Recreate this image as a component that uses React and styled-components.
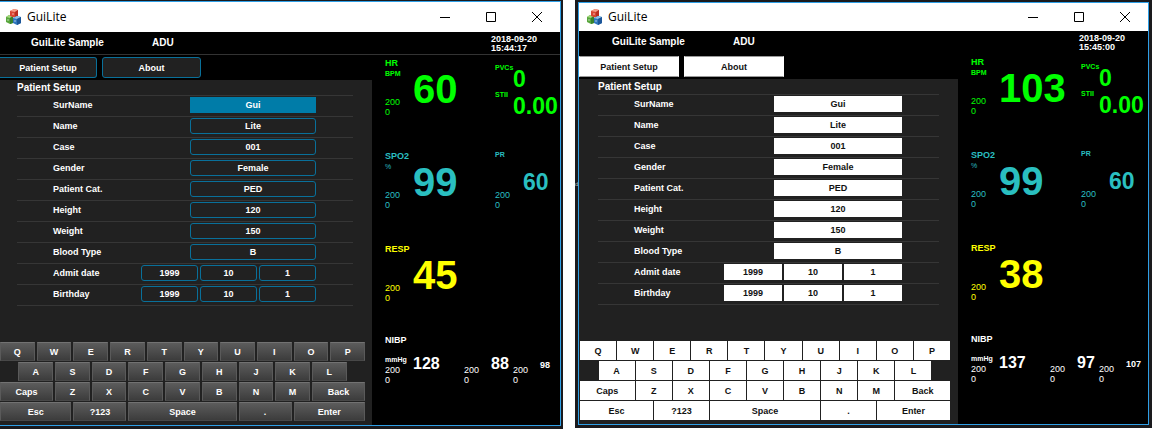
import React from 'react';
import styled, { createGlobalStyle, css } from 'styled-components';

const Global = createGlobalStyle`
  *, *::before, *::after { box-sizing: border-box; }
  body {
    margin: 0;
    background: #fff;
    color: #fff;
    font-family: "Liberation Sans Narrow", "Liberation Sans", Arial, sans-serif;
    font-size: 9px;
    line-height: 12px;
  }
  button, input { font: inherit; margin: 0; }
`;

const Page = styled.main`
  display: grid;
  grid-template-columns: minmax(0, 563fr) minmax(0, 577fr);
  gap: 12px;
  padding-right: 2px;
  align-items: start;
`;

const Desktop = styled.div`
  position: relative;
  padding: ${(p) => (p.$bright ? '2px 3px 3px' : '1px 2px 3px 0')};
  background: #1a1a1d;
`;

const DesktopCaption = styled.span`
  position: absolute;
  top: 178px;
  left: 0;
  color: #bbb;
  font-size: 6px;
`;

const WindowFrame = styled.section`
  position: relative;
  border: solid #2f9fe6;
  border-width: ${(p) => (p.$bright ? '1px' : '1px 1px 1px 0')};
  background: #000;
`;

const TitleBar = styled.header`
  display: flex;
  align-items: center;
  height: ${(p) => (p.$bright ? 28 : 30)}px;
  padding-left: ${(p) => (p.$bright ? 8 : 6)}px;
  background: #fff;
  color: #000;
`;

const WindowTitle = styled.h1`
  margin: 0 auto 0 5px;
  font: 400 12px/16px "Open Sans", "Noto Sans", sans-serif;
`;

const WindowButton = styled.button`
  display: flex;
  align-items: center;
  justify-content: center;
  width: 46px;
  height: 28px;
  padding: 0;
  border: 0;
  background: none;
  color: #000;
`;

const StatusBar = styled.div`
  display: flex;
  height: 23px;
  padding-left: ${(p) => (p.$bright ? 33 : 31)}px;
  border-bottom: 1px solid ${(p) => (p.$bright ? '#000' : '#333')};
  font-weight: 700;
`;

const StatusText = styled.div`
  width: 121px;
  font-size: 10px;
  line-height: 22px;
`;

const Clock = styled.time`
  width: 69px;
  margin-left: auto;
  padding-top: 3px;
  line-height: 9px;
`;

const ClockLine = styled.span`
  display: block;
`;

const Body = styled.div`
  display: grid;
  grid-template-columns: minmax(0, 1fr) ${(p) => (p.$bright ? 190 : 188)}px;
`;

const Left = styled.div`
  display: flex;
  flex-direction: column;
`;

const Tabs = styled.nav`
  display: flex;
  gap: 5px;
  padding: 2px 0;
`;

const face = css`
  border: 1px solid ${(p) => (p.$bright ? '#fff' : '#09709a')};
  border-radius: ${(p) => (p.$bright ? 0 : 3)}px;
  background: ${(p) => (p.$bright ? '#fff' : '#212121')};
  color: ${(p) => (p.$bright ? '#111' : '#fff')};
  font-weight: 700;
  text-align: center;
`;

const Tab = styled.button`
  ${face}
  width: ${(p) => (p.$bright ? 100 : 99)}px;
  height: 21px;
  padding: 0;
  ${(p) => p.$bright && css`border-color: #999 #fff;`}
  ${(p) => !p.$bright && css`
    &:first-child {
      width: 97px;
      border-left: 0;
      border-radius: 0 3px 3px 0;
    }
  `}
`;

const Panel = styled.div`
  flex: 1;
  background: #212121;
  font-weight: 700;
`;

const Form = styled.form`
  margin: 0 19px 36px ${(p) => (p.$bright ? 19 : 17)}px;
`;

const FormTitle = styled.h2`
  margin: 0;
  font-size: 10px;
  line-height: 15px;
`;

const FormRows = styled.div`
  border-bottom: 1px solid #363636;
`;

const Row = styled.div`
  display: flex;
  align-items: center;
  height: 21px;
  padding: 0 37px 2px 36px;
  border-top: 1px solid #363636;
`;

const RowLabel = styled.label`
  margin-right: auto;
`;

const Fields = styled.div`
  display: flex;
  gap: 2px;
`;

const fieldWidth = (p) => {
  if (p.$small) return p.$bright ? 58 : 57;
  return p.$bright ? 128 : 126;
};

const Field = styled.input`
  ${face}
  width: ${fieldWidth}px;
  height: 16px;
  padding: 0;
  ${(p) => p.$active && css`
    border-color: #007ca8;
    border-radius: 0;
    background: #007ca8;
  `}
`;

const Keyboard = styled.div`
  display: grid;
  grid-template-columns: repeat(20, minmax(0, 1fr));
  gap: 1px 0;
  padding: ${(p) => (p.$bright ? '0 7px 4px 1px' : '0 5px 4px 0')};
`;

const Key = styled.button`
  grid-column: ${(p) => p.$start} / span ${(p) => p.$span};
  height: 19px;
  margin-right: ${(p) => (p.$bright ? 1 : 2)}px;
  padding: 0;
  border: 1px solid;
  border-color: ${(p) => (p.$bright ? '#fff' : '#727272 #5a5a5a #484848 #5a5a5a')};
  background: ${(p) => (p.$bright ? '#fff' : 'linear-gradient(#5c5c5c, #3c3c3c)')};
  color: ${(p) => (p.$bright ? '#111' : '#fff')};
  font-weight: 700;
`;

const Vitals = styled.div`
  padding-left: 13px;
`;

const Block = styled.section`
  display: grid;
  grid-template-columns: 110px 1fr;
  align-items: start;
  height: 93px;
  padding-top: 2px;
  color: ${(p) => p.$color};
`;

const Measure = styled.div`
  display: flex;
`;

const MeasureLabels = styled.div`
  width: 28px;
`;

const Name = styled.div`
  height: 12px;
  font-size: ${(p) => (p.$small ? 7 : 9)}px;
  line-height: ${(p) => (p.$small ? 10 : 12)}px;
  font-weight: 700;
`;

const Unit = styled.div`
  height: 10px;
  font-size: 7px;
  font-weight: ${(p) => (p.$strong ? 700 : 400)};
  line-height: 10px;
`;

const Limits = styled.div`
  margin-top: ${(p) => (p.$spaced ? 18 : 0)}px;
  line-height: 10px;
`;

const Limit = styled.div`
  height: 10px;
`;

const valueSizes = {
  large: css`font-size: 40px; line-height: 64px;`,
  medium: css`font-size: 23px; line-height: 64px;`,
  small: css`font-size: 16px; line-height: 18px;`,
  tiny: css`font-size: 9px; line-height: 20px;`,
};

const Value = styled.div`
  ${(p) => valueSizes[p.$size]}
  font-weight: 700;
`;

const Pairs = styled.div`
  padding-top: 6px;
`;

const Pair = styled.div`
  display: grid;
  grid-template-columns: 18px 1fr;
  font-size: 7px;
  font-weight: 700;
  line-height: 10px;
`;

const PairValue = styled.div`
  margin-top: 5px;
  font-size: 23px;
  line-height: 22px;
`;

const Pressure = styled.section`
  font-weight: 400;
`;

const PressureGrid = styled.div`
  display: grid;
  grid-template-columns: 28px 51px 27px 22px 27px 1fr;
  margin-top: 9px;
`;

const PressureLabels = styled.div`
  min-width: 0;
`;

function AppIcon() {
  return (
    <svg width="16" height="16" viewBox="0 0 16 16" aria-hidden="true">
      <path d="M0 8l3-2 4 1v7l-3 1-4-2z" fill="#58a63c" />
      <path d="M0 8l3-2 4 1-3 2z" fill="#a5d87f" />
      <path d="M4 9l3-2v7l-3 1z" fill="#38812c" />
      <path d="M4 2l4-2 4 1v6l-3 2-5-2z" fill="#d94632" />
      <path d="M4 2l4-2 4 1-3 2z" fill="#f5a08c" />
      <path d="M9 3l3-2v6l-3 2z" fill="#b92e22" />
      <path d="M7 9l4-2 4 1v6l-4 2-4-2z" fill="#2f77bd" />
      <path d="M7 9l4-2 4 1-4 2z" fill="#92c4ea" />
      <path d="M11 10l4-2v6l-4 2z" fill="#1c5699" />
      <path d="M2 10v2M7 4v2M9 11v2" stroke="#fff" strokeOpacity=".6" />
    </svg>
  );
}

const glyphs = {
  Minimize: 'M1 6.5h10',
  Maximize: 'M1.5 1.5h9v9h-9z',
  Close: 'M1 1l10 10M11 1L1 11',
};

const rows = [
  ['SurName', ['Gui']],
  ['Name', ['Lite']],
  ['Case', ['001']],
  ['Gender', ['Female']],
  ['Patient Cat.', ['PED']],
  ['Height', ['120']],
  ['Weight', ['150']],
  ['Blood Type', ['B']],
  ['Admit date', ['1999', '10', '1']],
  ['Birthday', ['1999', '10', '1']],
];

const letters = (text, start) => [...text].map((c, i) => [c, start + i * 2, 2]);

const keys = [
  ...letters('QWERTYUIOP', 1),
  ...letters('ASDFGHJKL', 2),
  ['Caps', 1, 3],
  ...letters('ZXCVBNM', 4),
  ['Back', 18, 3],
  ['Esc', 1, 4],
  ['?123', 5, 3],
  ['Space', 8, 6],
  ['.', 14, 3],
  ['Enter', 17, 4],
];

function LimitPair({ spaced }) {
  return (
    <Limits $spaced={spaced}>
      <Limit>200</Limit>
      <Limit>0</Limit>
    </Limits>
  );
}

function Reading({ name, unit, value, size = 'large', smallName, strong }) {
  return (
    <Measure>
      <MeasureLabels>
        <Name $small={smallName}>{name}</Name>
        <Unit $strong={strong}>{unit}</Unit>
        <LimitPair spaced />
      </MeasureLabels>
      <Value $size={size}>{value}</Value>
    </Measure>
  );
}

function MonitorWindow({ id, bright, time, hr, resp, nibp }) {
  return (
    <WindowFrame $bright={bright}>
      <TitleBar $bright={bright}>
        <AppIcon />
        <WindowTitle>GuiLite</WindowTitle>
        {Object.entries(glyphs).map(([label, d]) => (
          <WindowButton key={label} aria-label={label}>
            <svg width="12" height="12" viewBox="0 0 12 12" fill="none" stroke="currentColor">
              <path d={d} />
            </svg>
          </WindowButton>
        ))}
      </TitleBar>
      <StatusBar $bright={bright}>
        <StatusText>GuiLite Sample</StatusText>
        <StatusText>ADU</StatusText>
        <Clock>
          <ClockLine>2018-09-20</ClockLine>
          <ClockLine>{time}</ClockLine>
        </Clock>
      </StatusBar>
      <Body $bright={bright}>
        <Left>
          <Tabs>
            <Tab $bright={bright}>Patient Setup</Tab>
            <Tab $bright={bright}>About</Tab>
          </Tabs>
          <Panel>
            <Form $bright={bright}>
              <FormTitle>Patient Setup</FormTitle>
              <FormRows>
                {rows.map(([label, values], r) => (
                  <Row key={label}>
                    <RowLabel htmlFor={`${id}-${r}-0`}>{label}</RowLabel>
                    <Fields>
                      {values.map((v, i) => (
                        <Field
                          key={i}
                          id={`${id}-${r}-${i}`}
                          aria-label={label}
                          defaultValue={v}
                          $bright={bright}
                          $small={values.length > 1}
                          $active={r === 0 && !bright}
                        />
                      ))}
                    </Fields>
                  </Row>
                ))}
              </FormRows>
            </Form>
            <Keyboard $bright={bright}>
              {keys.map(([label, start, span]) => (
                <Key key={label} $bright={bright} $start={start} $span={span}>{label}</Key>
              ))}
            </Keyboard>
          </Panel>
        </Left>
        <Vitals>
          <Block $color="#00ff00">
            <Reading name="HR" unit="BPM" value={hr} strong />
            <Pairs>
              <Pair>PVCs<PairValue>0</PairValue></Pair>
              <Pair>STII<PairValue>0.00</PairValue></Pair>
            </Pairs>
          </Block>
          <Block $color="#2abfc0">
            <Reading name="SPO2" unit="%" value="99" />
            <Reading name="PR" value="60" size="medium" smallName />
          </Block>
          <Block $color="#ffff00">
            <Reading name="RESP" value={resp} />
          </Block>
          <Pressure>
            <Name>NIBP</Name>
            <PressureGrid>
              {nibp.map((value, i) => (
                <React.Fragment key={i}>
                  <PressureLabels>
                    <Unit $strong>{i === 0 ? 'mmHg' : ''}</Unit>
                    <LimitPair />
                  </PressureLabels>
                  <Value $size={i === 2 ? 'tiny' : 'small'}>{value}</Value>
                </React.Fragment>
              ))}
            </PressureGrid>
          </Pressure>
        </Vitals>
      </Body>
    </WindowFrame>
  );
}

export default function App() {
  return (
    <Page>
      <Global />
      <Desktop>
        <MonitorWindow id="dark" time="15:44:17" hr="60" resp="45" nibp={['128', '88', '98']} />
      </Desktop>
      <Desktop $bright>
        <DesktopCaption aria-hidden="true">d</DesktopCaption>
        <MonitorWindow id="bright" bright time="15:45:00" hr="103" resp="38" nibp={['137', '97', '107']} />
      </Desktop>
    </Page>
  );
}
